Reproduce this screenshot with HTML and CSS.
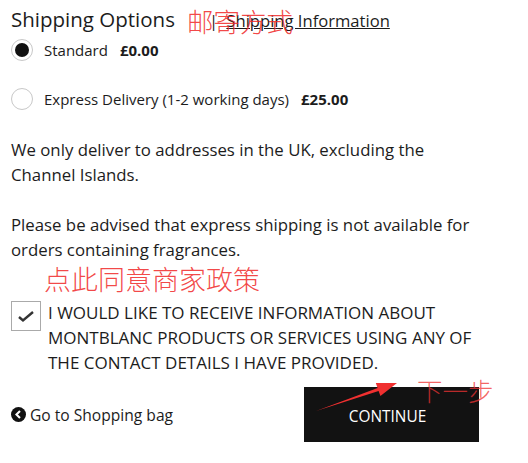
FILE: index.html
```html
<!DOCTYPE html>
<html lang="en">

<head>
  <meta charset="UTF-8">
  <meta name="viewport" content="width=device-width, initial-scale=1.0">
  <title>Shipping Options</title>
  <link rel="stylesheet" href="styles.css">
</head>

<body>
  <div class="checkout">
    <div class="heading">
      <h2>Shipping Options</h2>
      <span class="info-link">| <a href="#">Shipping Information</a></span>
    </div>

    <div class="options">
      <label class="option">
        <span class="radio checked"></span>
        <span class="option-name">Standard</span>
        <span class="price">£0.00</span>
      </label>
      <label class="option">
        <span class="radio"></span>
        <span class="option-name">Express Delivery (1-2 working days)</span>
        <span class="price">£25.00</span>
      </label>
    </div>

    <p>We only deliver to addresses in the UK, excluding the Channel Islands.</p>
    <p>Please be advised that express shipping is not available for orders containing fragrances.</p>

    <label class="consent">
      <span class="checkbox">
        <svg width="28" height="28" viewBox="0 0 28 28">
          <polyline points="7,15 11,18.5 21,10" fill="none" stroke="#333" stroke-width="2.4" />
        </svg>
      </span>
      <span class="consent-text">I would like to receive information about Montblanc products or services using any of the contact details I have provided.</span>
    </label>

    <div class="footer">
      <a class="back" href="#">
        <svg width="15" height="15" viewBox="0 0 16 16">
          <circle cx="8" cy="8" r="8" fill="#111" />
          <polyline points="9.6,4.2 5.8,8 9.6,11.8" fill="none" stroke="#fff" stroke-width="2.2" />
        </svg>
        Go to Shopping bag
      </a>
      <button type="button" class="continue">CONTINUE</button>
    </div>
  </div>

  <!-- annotations -->
  <span class="note note-shipping">邮寄方式</span>
  <span class="note note-agree">点此同意商家政策</span>
  <span class="note note-next">下一步</span>
  <svg class="note-arrow" width="528" height="463" viewBox="0 0 528 463">
    <polygon points="316,411 377.6,388 375.8,382.9 397,383 380.4,396.1 378.6,390.9" fill="#f03030" />
  </svg>
</body>

</html>
```

FILE: styles.css
```css
body {
  margin: 0;
  position: relative;
  font-family: "Open Sans", "Noto Sans", sans-serif;
  color: #1c1c1c;
  background: #fff;
}

.checkout {
  width: 468px;
  padding: 0 0 0 11px;
}

.heading {
  display: flex;
  align-items: baseline;
  margin-top: 4px;
  height: 30px;
  line-height: 30px;
}

h2 {
  margin: 0;
  font-size: 20.5px;
  font-weight: 400;
}

.info-link {
  margin-left: 34px;
  font-size: 16.6px;
}

.info-link a {
  margin-left: 4px;
  color: #1c1c1c;
  text-decoration: underline;
}

.options {
  display: flex;
  flex-direction: column;
  gap: 19px;
  margin-top: 1px;
}

.option {
  display: flex;
  align-items: center;
  height: 30px;
  font-size: 15px;
}

.radio {
  width: 20px;
  height: 20px;
  border: 1px solid #c8c8c8;
  border-radius: 50%;
  position: relative;
  box-sizing: content-box;
}

.radio.checked::after {
  content: "";
  position: absolute;
  top: 3px;
  left: 3px;
  width: 14px;
  height: 14px;
  border-radius: 50%;
  background: #111;
}

.option-name {
  margin-left: 11px;
}

.price {
  margin-left: 12px;
  font-weight: 700;
}

p {
  margin: 23px 0 0;
  font-size: 16.8px;
  line-height: 25px;
}

p + p {
  margin-top: 25px;
}

.consent {
  display: flex;
  align-items: flex-start;
  gap: 7px;
  margin-top: 38px;
}

.checkbox {
  flex: none;
  width: 28px;
  height: 28px;
  margin-top: 0.5px;
  border: 1px solid #aaa;
}

.checkbox svg {
  display: block;
}

.consent-text {
  font-size: 17px;
  line-height: 25px;
  text-transform: uppercase;
}

.footer {
  display: flex;
  justify-content: space-between;
  align-items: center;
  margin-top: 12px;
}

.back {
  display: flex;
  align-items: center;
  gap: 4px;
  font-size: 15.6px;
  color: #1c1c1c;
  text-decoration: none;
}

.continue {
  width: 175px;
  height: 55px;
  padding: 4px 8px 0 0;
  border: none;
  background: #121212;
  color: #fff;
  font-family: "Open Sans", "Noto Sans", sans-serif;
  font-size: 15.4px;
  cursor: pointer;
}

.note {
  position: absolute;
  font-family: "Noto Sans CJK SC", sans-serif;
  font-weight: 300;
  color: rgba(240, 40, 40, 0.85);
  line-height: 1;
}

.note-shipping {
  top: 8px;
  left: 187px;
  font-size: 26.5px;
}

.note-agree {
  top: 265px;
  left: 44px;
  font-size: 27px;
}

.note-next {
  top: 377px;
  left: 417px;
  font-size: 25.5px;
  color: rgba(240, 50, 50, 0.75);
}

.note-arrow {
  position: absolute;
  top: 0;
  left: 0;
  pointer-events: none;
}
```
